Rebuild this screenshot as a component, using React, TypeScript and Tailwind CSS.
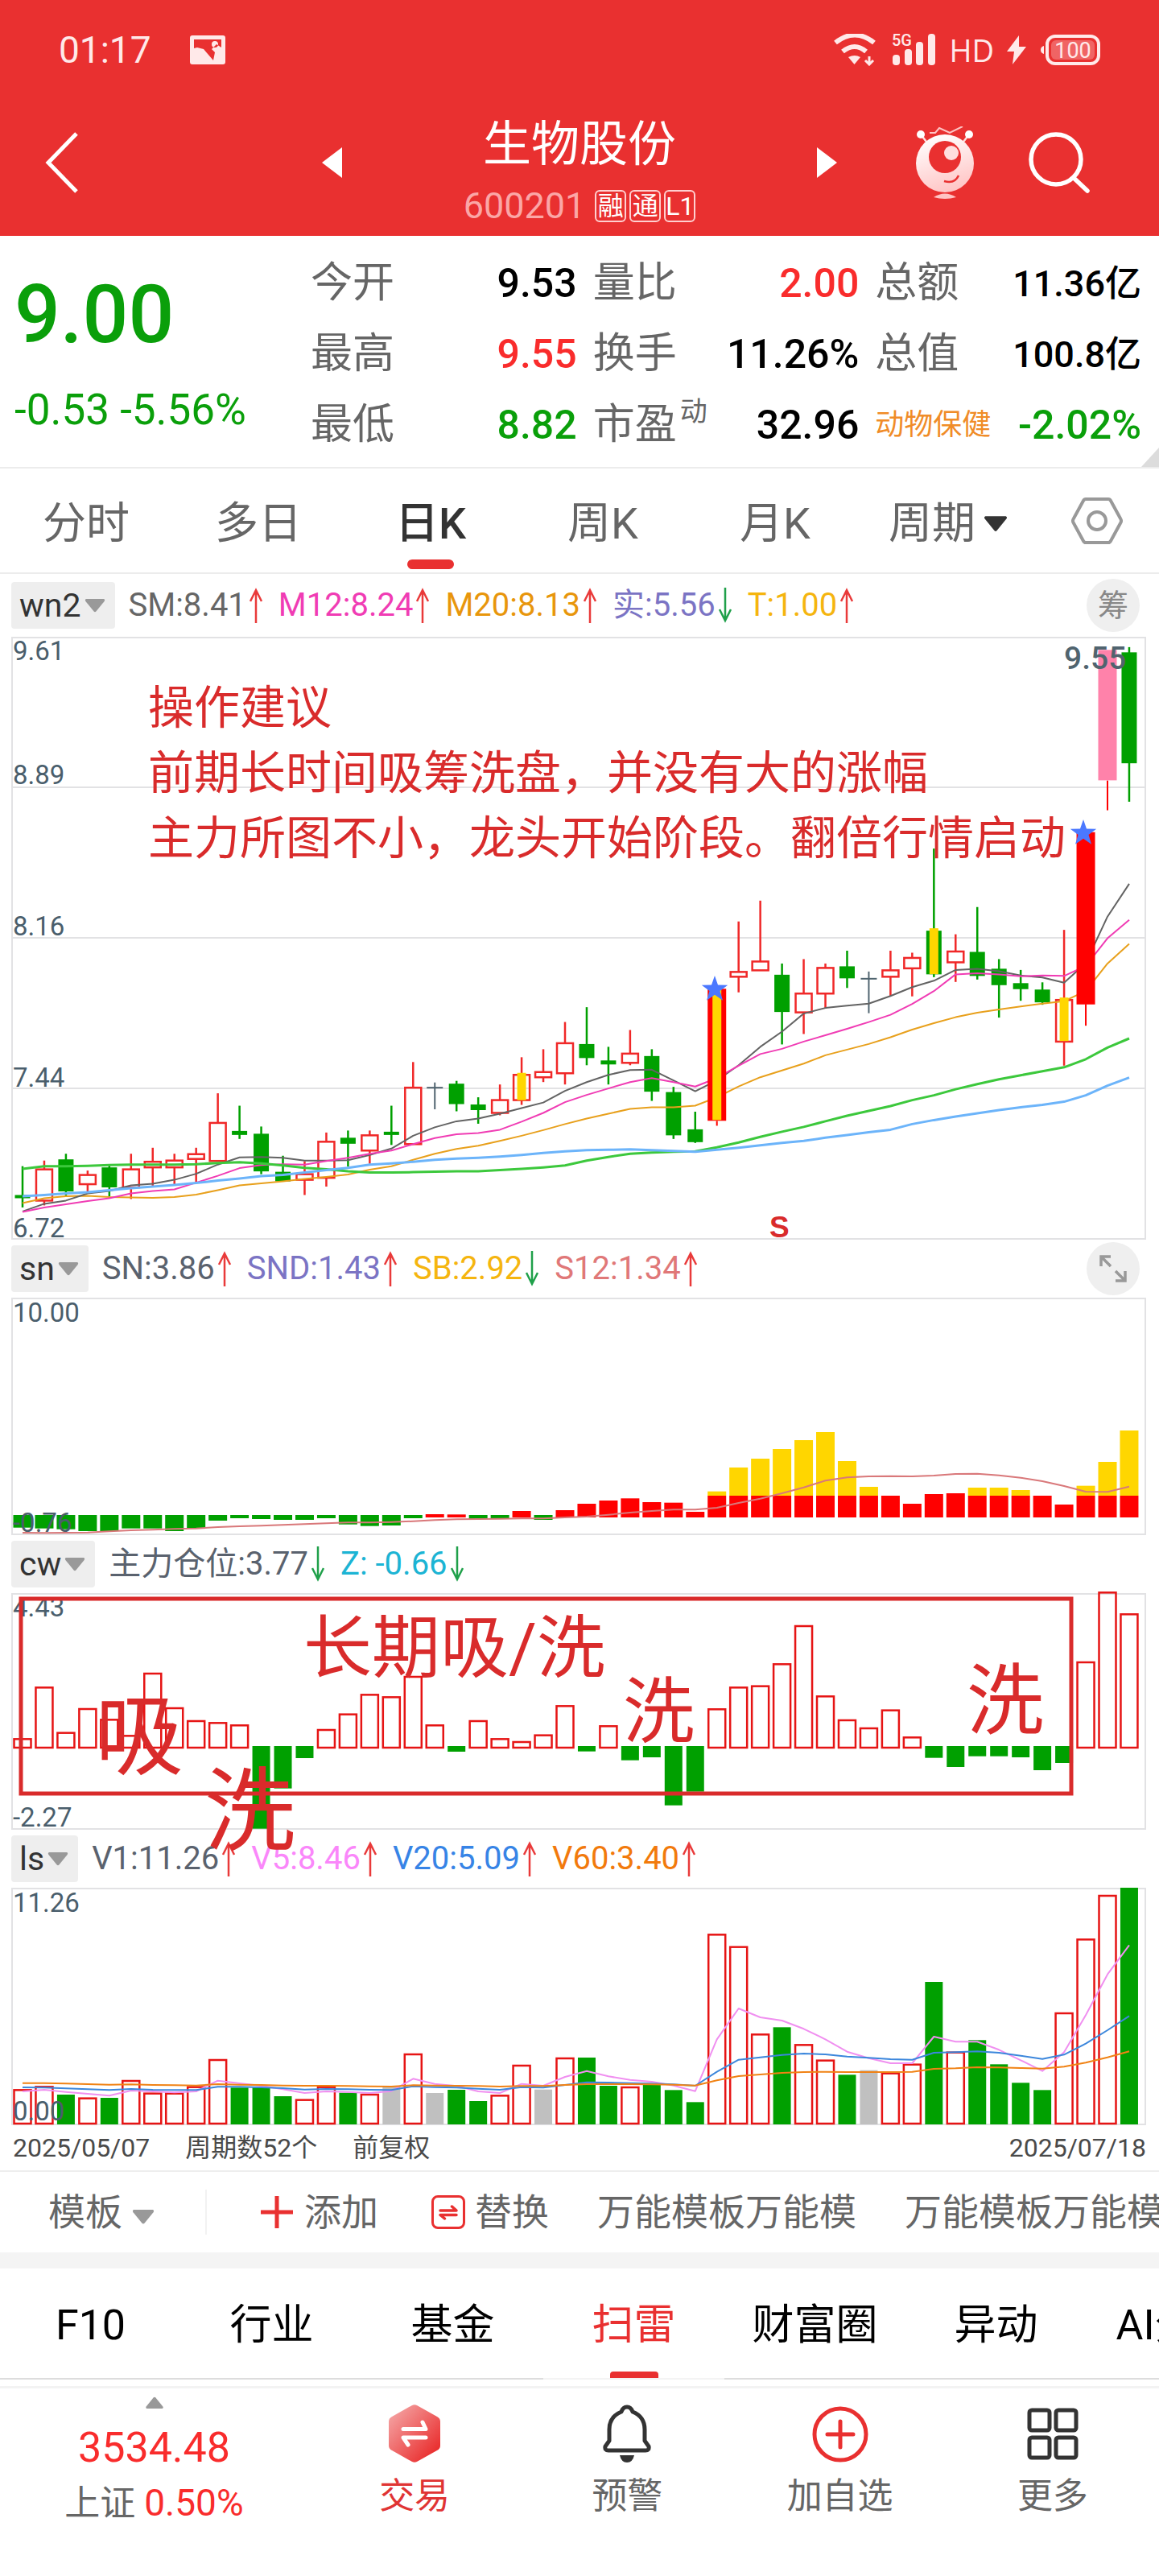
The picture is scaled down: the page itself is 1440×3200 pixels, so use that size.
import React from "react";

type Kind = "up" | "down" | "flat";

const STEP = 26.96;
const cx = (i: number) => 28 + STEP * i;

const line = (ys: number[], map: (v: number) => number) =>
  ys.map((v, i) => `${cx(i).toFixed(1)},${map(v).toFixed(1)}`).join(" ");

/* ---------- K-line data: kind, high, body top, body bottom, low ---------- */
const CANDLES: [Kind, number, number, number, number][] = [
  ["down", 1342, 1414, 1420, 1445],
  ["up", 1328, 1350, 1428, 1440],
  ["down", 1311, 1325, 1405, 1415],
  ["up", 1353, 1364, 1387, 1405],
  ["down", 1340, 1345, 1395, 1418],
  ["up", 1311, 1350, 1395, 1424],
  ["up", 1296, 1331, 1345, 1392],
  ["up", 1311, 1328, 1345, 1388],
  ["up", 1296, 1312, 1324, 1382],
  ["up", 1160, 1234, 1329, 1329],
  ["down", 1191, 1254, 1264, 1274],
  ["down", 1243, 1261, 1355, 1362],
  ["down", 1316, 1356, 1380, 1380],
  ["up", 1330, 1362, 1376, 1414],
  ["up", 1258, 1281, 1371, 1393],
  ["down", 1253, 1271, 1286, 1343],
  ["up", 1253, 1265, 1303, 1336],
  ["down", 1191, 1256, 1264, 1289],
  ["up", 1082, 1146, 1287, 1287],
  ["flat", 1133, 1146, 1146, 1200],
  ["down", 1129, 1136, 1187, 1205],
  ["down", 1170, 1188, 1202, 1236],
  ["up", 1138, 1177, 1209, 1215],
  ["up", 1070, 1114, 1177, 1189],
  ["up", 1050, 1107, 1120, 1132],
  ["up", 982, 1035, 1110, 1138],
  ["down", 945, 1037, 1072, 1090],
  ["down", 1044, 1078, 1088, 1138],
  ["up", 1002, 1061, 1084, 1090],
  ["down", 1050, 1067, 1156, 1179],
  ["down", 1144, 1157, 1265, 1274],
  ["down", 1206, 1250, 1282, 1284],
  ["up", 899, 899, 1229, 1242],
  ["up", 731, 857, 869, 908],
  ["up", 679, 831, 853, 853],
  ["down", 836, 864, 957, 1038],
  ["up", 825, 911, 958, 1012],
  ["up", 836, 847, 911, 948],
  ["down", 804, 843, 873, 897],
  ["flat", 856, 874, 874, 960],
  ["up", 804, 853, 869, 917],
  ["up", 809, 822, 848, 918],
  ["down", 549, 754, 863, 870],
  ["up", 763, 806, 833, 882],
  ["down", 695, 807, 867, 876],
  ["down", 825, 849, 890, 971],
  ["down", 852, 885, 900, 929],
  ["down", 883, 901, 933, 939],
  ["up", 752, 927, 1031, 1091],
  ["up", 508, 508, 937, 991],
  ["up", 53, 53, 379, 453],
  ["down", 46, 59, 336, 432],
];

const MA: { color: string; w: number; ys: number[] }[] = [
  { color: "#e8a01c", w: 2, ys: [1434, 1422, 1417, 1416, 1419, 1420, 1421, 1419, 1413, 1402, 1390, 1385, 1380, 1374, 1369, 1363, 1351, 1342, 1326, 1311, 1299, 1291, 1279, 1266, 1252, 1237, 1223, 1211, 1199, 1195, 1195, 1191, 1170, 1143, 1120, 1103, 1086, 1065, 1051, 1037, 1020, 1001, 985, 970, 959, 951, 943, 936, 930, 905, 836, 787] },
  { color: "#636363", w: 2, ys: [1455, 1436, 1428, 1410, 1404, 1390, 1386, 1376, 1361, 1338, 1320, 1319, 1321, 1328, 1328, 1327, 1314, 1298, 1266, 1245, 1230, 1223, 1211, 1197, 1183, 1154, 1132, 1114, 1102, 1101, 1128, 1155, 1128, 1090, 1044, 1006, 961, 947, 941, 936, 917, 895, 879, 852, 849, 855, 866, 871, 884, 835, 719, 637] },
  { color: "#f03cb4", w: 2, ys: [1456, 1445, 1437, 1429, 1422, 1410, 1404, 1400, 1383, 1366, 1347, 1339, 1337, 1338, 1329, 1321, 1311, 1303, 1287, 1272, 1262, 1259, 1251, 1231, 1209, 1182, 1164, 1148, 1132, 1122, 1132, 1143, 1122, 1091, 1062, 1049, 1031, 1015, 999, 982, 964, 937, 905, 863, 860, 863, 868, 866, 867, 842, 773, 727] },
  { color: "#3cc83c", w: 3, ys: [1349, 1342, 1342, 1341, 1339, 1338, 1338, 1338, 1337, 1334, 1332, 1335, 1340, 1346, 1350, 1355, 1358, 1358, 1357, 1356, 1355, 1355, 1352, 1349, 1345, 1340, 1328, 1319, 1311, 1308, 1306, 1305, 1295, 1283, 1269, 1256, 1244, 1230, 1216, 1204, 1192, 1177, 1165, 1150, 1137, 1125, 1115, 1105, 1095, 1075, 1046, 1023] },
  { color: "#6cb4fa", w: 3, ys: [1417, 1414, 1410, 1407, 1402, 1397, 1393, 1389, 1384, 1378, 1373, 1367, 1364, 1358, 1352, 1346, 1338, 1335, 1331, 1326, 1323, 1321, 1318, 1314, 1309, 1305, 1302, 1301, 1300, 1302, 1304, 1306, 1301, 1296, 1290, 1284, 1279, 1271, 1264, 1257, 1251, 1237, 1227, 1218, 1210, 1202, 1195, 1189, 1181, 1165, 1141, 1121] },
];

const ky = (v: number) => v / 2.01 - 10;

const Frame = ({ h, grid = [] }: { h: number; grid?: number[] }) => (
  <g stroke="#e2e2e4" strokeWidth="2" fill="none">
    <rect x="15" y="1" width="1408" height={h - 2} />
    {grid.map((y) => (
      <line key={y} x1="15" x2="1423" y1={y} y2={y} />
    ))}
  </g>
);

const AxisText = ({ y, children }: { y: number; children: string }) => (
  <text x="16" y={y} fontSize="33" fill="#4a5e6c">
    {children}
  </text>
);

const star = (x: number, y: number, r: number) =>
  Array.from({ length: 10 }, (_, i) => {
    const a = -Math.PI / 2 + (i * Math.PI) / 5;
    const q = i % 2 ? r * 0.4 : r;
    return `${(x + q * Math.cos(a)).toFixed(1)},${(y + q * Math.sin(a)).toFixed(1)}`;
  }).join(" ");

function KLineChart() {
  return (
    <svg viewBox="0 0 1440 749" className="block h-auto w-full" role="img" aria-label="日K线">
      <Frame h={749} grid={[187, 374, 561]} />
      <AxisText y={29}>9.61</AxisText>
      <AxisText y={183}>8.89</AxisText>
      <AxisText y={371}>8.16</AxisText>
      <AxisText y={559}>7.44</AxisText>
      <AxisText y={746}>6.72</AxisText>
      {CANDLES.map(([kind, hi, top, bot, lo], i) => {
        const x = cx(i);
        if (i === 32 || i === 49 || i === 50) return null;
        if (kind === "flat")
          return (
            <g key={i} stroke="#50646f" strokeWidth="2">
              <line x1={x} x2={x} y1={ky(hi)} y2={ky(lo)} />
              <line x1={x - 10} x2={x + 10} y1={ky(top)} y2={ky(top)} />
            </g>
          );
        if (kind === "down")
          return (
            <g key={i} fill="#00a000">
              <rect x={x - 1.25} width="2.5" y={ky(hi)} height={ky(lo) - ky(hi)} />
              <rect x={x - 9.5} width="19" y={ky(top)} height={Math.max(4, ky(bot) - ky(top))} />
            </g>
          );
        return (
          <g key={i} fill="none" stroke="#f02828" strokeWidth="2.500">
            <line x1={x} x2={x} y1={ky(hi)} y2={ky(top)} />
            <line x1={x} x2={x} y1={ky(bot)} y2={ky(lo)} />
            <rect x={x - 10} width="20" y={ky(top)} height={ky(bot) - ky(top)} />
          </g>
        );
      })}
      {MA.map((m) => (
        <polyline key={m.color} points={line(m.ys, ky)} fill="none" stroke={m.color} strokeWidth={m.w} strokeLinejoin="round" />
      ))}
      <g fill="#ffd600">
        <rect x={cx(23) - 5.5} width="11" y={ky(1109)} height={34} />
        <rect x={cx(42) - 5.5} width="11" y={ky(748)} height={57} />
        <rect x={cx(48) - 5.5} width="11" y={ky(921)} height={54} />
      </g>
      <g fill="#ff0000">
        <rect x={cx(32) - 11.5} width="23" y={ky(899)} height={164} />
        <rect x={cx(32) - 1} width="2" y={ky(1229)} height={6} />
        <rect x={cx(49) - 11.5} width="23" y={ky(508)} height={214} />
        <rect x={cx(49) - 1} width="2" y={ky(937)} height={27} />
        <rect x={cx(50) - 1} width="2" y={ky(379)} height={37} />
      </g>
      <rect x={cx(32) - 5.5} width="11" y={ky(899)} height={163} fill="#ffd600" />
      <rect x={cx(50) - 11.5} width="23" y={ky(53)} height={162} fill="#ff82aa" />
      <polygon points={star(888, 438, 17)} fill="#4b78ff" />
      <polygon points={star(1346, 244, 17)} fill="#4b78ff" />
      <text x="1322" y="40" fontSize="39" fontWeight="500" fill="#50646f">9.55</text>
      <text x="956" y="746" fontSize="37" fontWeight="700" fill="#d92b2b" fontFamily="Liberation Sans">S</text>
      <g fontSize="57" fill="#d92b2b">
        <text x="184" y="108">操作建议</text>
        <text x="184" y="189">前期长时间吸筹洗盘，并没有大的涨幅</text>
        <text x="184" y="270">主力所图不小，龙头开始阶段。翻倍行情启动</text>
      </g>
    </svg>
  );
}

/* g = below zero, r = above zero, y = above the strong threshold */
const SN: [string, number][] = [
  ["g", 1070], ["g", 1073], ["g", 1076], ["g", 1083], ["g", 1083], ["g", 1073], ["g", 1073], ["g", 1083], ["g", 1073], ["g", 1044],
  ["g", 1035], ["g", 1038], ["g", 1041], ["g", 1041], ["g", 1035], ["g", 1058], ["g", 1064], ["g", 1062], ["g", 1035], ["r", 1020],
  ["r", 1021], ["g", 1038], ["g", 1035], ["r", 1008], ["g", 1041], ["r", 1005], ["r", 981], ["r", 969], ["r", 961], ["r", 975],
  ["r", 977], ["r", 1011], ["y", 935], ["y", 846], ["y", 813], ["y", 777], ["y", 744], ["y", 714], ["y", 822], ["y", 918],
  ["r", 951], ["r", 981], ["r", 945], ["r", 942], ["y", 921], ["y", 921], ["y", 930], ["r", 951], ["r", 984], ["y", 914],
  ["y", 825], ["y", 708],
];
const SN_LINE = [1089, 1090, 1089, 1088, 1084, 1080, 1078, 1075, 1073, 1068, 1065, 1063, 1060, 1057, 1054, 1051, 1051, 1049, 1046, 1042, 1039, 1038, 1037, 1036, 1036, 1032, 1029, 1022, 1014, 1008, 1003, 1003, 996, 978, 962, 942, 920, 895, 883, 879, 878, 879, 876, 870, 869, 875, 884, 897, 915, 936, 937, 917];
const sy = (v: number) => v / 3 - 71;

function SnChart() {
  return (
    <svg viewBox="0 0 1440 295" className="block h-auto w-full" role="img" aria-label="sn 指标">
      <Frame h={295} />
      {SN.map(([k, v], i) => {
        const x = cx(i) - 11.5;
        if (k === "g") return <rect key={i} x={x} width="23" y="270" height={sy(v) - 270} fill="#00a000" />;
        return (
          <g key={i}>
            {k === "y" && <rect x={x} width="23" y={sy(v)} height={246 - sy(v)} fill="#ffd600" />}
            <rect x={x} width="23" y={k === "y" ? 246 : sy(v)} height={k === "y" ? 27 : 273 - sy(v)} fill="#ff0000" />
          </g>
        );
      })}
      <polyline points={line(SN_LINE, sy)} fill="none" stroke="#d9787a" strokeWidth="2" strokeLinejoin="round" />
      <AxisText y={30}>10.00</AxisText>
      <AxisText y={291}>-0.76</AxisText>
    </svg>
  );
}

const CW = [778, 586, 755, 666, 706, 766, 534, 663, 711, 718, 727, 1115, 965, 852, 744, 686, 613, 622, 546, 727, 828, 711, 778, 789, 764, 655, 827, 730, 860, 849, 1028, 977, 667, 586, 581, 499, 357, 619, 708, 738, 671, 772, 851, 885, 845, 845, 849, 897, 870, 492, 232, 313];
const cy = (v: number) => v / 3 - 79;

function CwChart() {
  return (
    <svg viewBox="0 0 1440 294" className="pointer-events-none relative z-10 block h-auto w-full overflow-visible" role="img" aria-label="主力仓位">
      <Frame h={294} />
      <AxisText y={29}>4.43</AxisText>
      <AxisText y={290}>-2.27</AxisText>
      {CW.map((v, i) =>
        v > 810 ? (
          <rect key={i} x={cx(i) - 11} width="22" y="190" height={cy(v) - 190} fill="#00a000" />
        ) : (
          <rect key={i} x={cx(i) - 10.5} width="21" y={cy(v) + 1} height={191 - cy(v)} fill="none" stroke="#e61414" strokeWidth="2.500" />
        ),
      )}
      <rect x="26" y="7" width="1305" height="242" fill="none" stroke="#d92b2b" strokeWidth="5" />
      <g fill="#d92b2b">
        <text x="377" y="98" fontSize="85">长期吸/洗</text>
        <text x="118" y="217" fontSize="110">吸</text>
        <text x="254" y="310" fontSize="113">洗</text>
        <text x="774" y="178" fontSize="89">洗</text>
        <text x="1201" y="167" fontSize="96">洗</text>
      </g>
    </svg>
  );
}

const VOL: [Kind, number][] = [
  ["up", 976], ["up", 964], ["down", 996], ["up", 1007], ["down", 1008], ["up", 942], ["up", 989], ["up", 989], ["up", 965], ["up", 864],
  ["down", 970], ["down", 970], ["down", 1002], ["up", 1013], ["up", 965], ["down", 989], ["up", 993], ["flat", 965], ["up", 843], ["flat", 990],
  ["down", 978], ["down", 1020], ["up", 997], ["up", 885], ["flat", 977], ["up", 858], ["down", 858], ["down", 963], ["up", 966], ["down", 960],
  ["down", 979], ["down", 1024], ["up", 397], ["up", 443], ["up", 769], ["down", 745], ["up", 808], ["up", 866], ["down", 922], ["flat", 905],
  ["up", 914], ["up", 881], ["down", 576], ["up", 836], ["down", 793], ["down", 883], ["down", 952], ["down", 979], ["up", 690], ["up", 415],
  ["up", 252], ["down", 223],
];
const VOL_LINES = [
  { color: "#f090f0", ys: [984, 978, 986, 993, 1000, 981, 984, 988, 984, 944, 954, 963, 976, 990, 984, 986, 990, 983, 937, 956, 964, 984, 990, 956, 963, 930, 908, 928, 941, 948, 962, 983, 790, 675, 708, 720, 751, 790, 836, 860, 879, 879, 780, 799, 799, 829, 868, 908, 838, 700, 548, 439] },
  { color: "#3c87dc", ys: [969, 970, 973, 976, 979, 975, 978, 979, 979, 967, 967, 969, 972, 977, 975, 976, 978, 979, 965, 968, 970, 974, 978, 968, 970, 960, 950, 951, 953, 955, 958, 963, 911, 866, 857, 848, 843, 846, 854, 859, 864, 866, 840, 838, 835, 840, 851, 863, 847, 806, 756, 703] },
  { color: "#f08214", ys: [953, 953, 955, 957, 959, 958, 960, 961, 962, 957, 959, 960, 962, 963, 963, 964, 965, 966, 961, 962, 963, 964, 966, 964, 964, 960, 957, 957, 957, 958, 959, 962, 943, 927, 921, 915, 912, 911, 912, 912, 912, 911, 900, 898, 894, 895, 897, 899, 892, 877, 857, 835] },
];
const vy = (v: number) => v / 3 - 75;

function VolumeChart() {
  return (
    <svg viewBox="0 0 1440 295" className="block h-auto w-full" role="img" aria-label="成交量">
      <Frame h={295} />
      {VOL.map(([k, v], i) =>
        k === "up" ? (
          <rect key={i} x={cx(i) - 10.5} width="21" y={vy(v) + 1} height={292 - vy(v)} fill="none" stroke="#e61414" strokeWidth="2.500" />
        ) : (
          <rect key={i} x={cx(i) - 11} width="22" y={vy(v)} height={294 - vy(v)} fill={k === "down" ? "#00a000" : "#c0c0c0"} />
        ),
      )}
      {VOL_LINES.map((l) => (
        <polyline key={l.color} points={line(l.ys, vy)} fill="none" stroke={l.color} strokeWidth="2" strokeLinejoin="round" />
      ))}
      <AxisText y={30}>11.26</AxisText>
      <AxisText y={289}>0.00</AxisText>
    </svg>
  );
}

/* ------------------------------ indicator rows ------------------------------ */
const Caret = ({ className }: { className: string }) => (
  <svg viewBox="0 0 26 18" className={className} aria-hidden="true">
    <path d="M2 1h22q2 1 .6 3L14.4 16.500q-1.400 1.500-2.800 0L1.400 4Q0 2 2 1z" fill="currentColor" />
  </svg>
);

const Arrow = ({ up }: { up: boolean }) => (
  <svg viewBox="0 0 16 44" className="h-11 w-4 shrink-0" fill="none" stroke={up ? "#e93a3a" : "#1fa04a"} strokeWidth="2.500" aria-hidden="true">
    <path d={up ? "M8 44V3M1 17L8 3l7 14" : "M8 0v41M1 27l7 14 7-14"} />
  </svg>
);

type Item = { text: string; color: string; up: boolean };

function IndicatorRow({ name, items, height, children }: { name: string; items: Item[]; height: string; children?: React.ReactNode }) {
  return (
    <div className={`flex items-center pr-6 pl-[14px] ${height}`}>
      <button className="flex h-[58px] items-center gap-1 rounded bg-[#eeeeee] pr-3 pl-[10px] text-[41px] leading-none text-[#333]">
        {name}
        <Caret className="w-[26px] text-[#999]" />
      </button>
      <div className="flex flex-1 items-center gap-5 pl-[17px]">
        {items.map((it) => (
          <span key={it.text} className={`flex items-center gap-1 text-[40px] leading-none whitespace-nowrap ${it.color}`}>
            {it.text}
            <Arrow up={it.up} />
          </span>
        ))}
      </div>
      {children}
    </div>
  );
}

/* --------------------------------- quote --------------------------------- */
const QUOTE: { label: string; sup?: string; value: string; color: string; small?: boolean }[] = [
  { label: "今开", value: "9.53", color: "text-black" },
  { label: "量比", value: "2.00", color: "text-[#f92c2c]" },
  { label: "总额", value: "11.36亿", color: "text-black", small: true },
  { label: "最高", value: "9.55", color: "text-[#f92c2c]" },
  { label: "换手", value: "11.26%", color: "text-black" },
  { label: "总值", value: "100.8亿", color: "text-black", small: true },
  { label: "最低", value: "8.82", color: "text-[#0a9f0a]" },
  { label: "市盈", sup: "动", value: "32.96", color: "text-black" },
  { label: "动物保健", value: "-2.02%", color: "text-[#0a9f0a]" },
];

function StatusBar() {
  return (
    <div className="flex h-[120px] items-center px-[73px] pt-1 text-[#ffe9e9]">
      <span className="text-[46px] leading-none">01:17</span>
      <svg viewBox="0 0 44 36" className="ml-[48px] h-9 w-11" aria-hidden="true">
        <path fillRule="evenodd" fill="currentColor" d="M3 0h38q3 0 3 3v30q0 3-3 3H3q-3 0-3-3V3q0-3 3-3zM5 5v11l4-1 8 2 12 14 2-10-4-4 6-6 6 4V5zM31 7a4 4 0 1 1 0 8 4 4 0 0 1 0-8z" />
      </svg>
      <div className="flex flex-1 items-center justify-end">
        <svg viewBox="0 0 52 40" className="h-10 w-[52px]" fill="none" stroke="currentColor" aria-hidden="true">
          <path d="M2 11q24-19 48 0" strokeWidth="6" />
          <path d="M11 22q15-12 29 0" strokeWidth="6" />
          <path d="M18 29q8-4 15 0l-7.500 9z" fill="currentColor" stroke="none" />
          <path d="M44 28v9M39 33l5 5 5-5" strokeWidth="3" />
        </svg>
        <svg viewBox="0 0 54 40" className="ml-[21px] h-10 w-[54px] overflow-visible" fill="currentColor" aria-hidden="true">
          <text x="-1" y="15" fontSize="20" fontWeight="500">5G</text>
          <rect x="0" y="26" width="9" height="13" rx="4" />
          <rect x="15" y="19" width="9" height="20" rx="4" />
          <rect x="29" y="10" width="9" height="29" rx="4" />
          <rect x="44" y="0" width="9" height="39" rx="4" />
        </svg>
        <span className="ml-4 font-['Open_Sans'] text-[38px] leading-none">HD</span>
        <svg viewBox="0 0 24 36" className="ml-4 h-9 w-6" fill="currentColor" aria-hidden="true">
          <path d="M15 0L0 20h9L7 36l17-22h-9z" />
        </svg>
        <svg viewBox="0 0 74 38" className="ml-[18px] h-[38px] w-[74px]" aria-hidden="true">
          <path d="M4 14v10q-4-1-4-5t4-5z" fill="currentColor" />
          <rect x="8" y="2" width="64" height="34" rx="10" fill="none" stroke="currentColor" strokeWidth="4" />
          <rect x="13" y="7" width="54" height="24" rx="6" fill="#f06464" />
          <text x="40" y="29" textAnchor="middle" fontSize="27" fill="currentColor">100</text>
        </svg>
      </div>
    </div>
  );
}

const Mascot = () => (
  <svg viewBox="0 0 72 90" className="h-[90px] w-[72px]" aria-hidden="true">
    <defs>
      <linearGradient id="m" x1="0.3" y1="0" x2="0.6" y2="1">
        <stop offset="0" stopColor="#fff" />
        <stop offset="1" stopColor="#ffc4c4" />
      </linearGradient>
    </defs>
    <path d="M17 8h7l5-6 13 6L58 0" fill="none" stroke="#ffc4c4" strokeWidth="2" />
    <path d="M6 10l10 13M66 10L56 23" stroke="#ffdede" strokeWidth="2.500" />
    <circle cx="6" cy="10" r="5" fill="#fff" />
    <circle cx="66" cy="10" r="5" fill="#fff" />
    <circle cx="36" cy="46" r="36" fill="url(#m)" />
    <circle cx="36" cy="38" r="20" fill="#e93030" />
    <circle cx="44" cy="33" r="9" fill="#ffdede" />
    <path d="M35 68q13 4 18-7" fill="none" stroke="#e93030" strokeWidth="2.500" />
    <path d="M22 88q14-9 28 0-14 4-28 0z" fill="#ffc4c4" />
  </svg>
);

function NavBar() {
  return (
    <div className="grid h-[164px] grid-cols-[1fr_640px_1fr] items-center">
      <button aria-label="返回" className="ml-14 justify-self-start">
        <svg viewBox="0 0 42 76" className="h-[76px] w-[42px]" fill="none" stroke="#fff" strokeWidth="5">
          <path d="M39 2L4 38l35 36" />
        </svg>
      </button>
      <div className="flex items-center justify-between">
        <button aria-label="上一只">
          <svg viewBox="0 0 26 38" className="h-[38px] w-[26px]" fill="#fff"><path d="M25 0v38L0 19z" /></svg>
        </button>
        <div className="flex h-[164px] flex-col items-center pt-[26px]">
          <h1 className="text-[60px] leading-[68px] text-white">生物股份</h1>
          <div className="mt-[22px] flex h-10 items-center gap-1">
            <span className="mr-2 text-[45px] leading-10 text-[#fba6a6]">600201</span>
            {["融", "通", "L1"].map((t) => (
              <span key={t} className="flex h-10 w-[39px] items-center justify-center rounded-md border-2 border-[#ffd0d0] text-[32px] leading-none text-white">
                {t}
              </span>
            ))}
          </div>
        </div>
        <button aria-label="下一只">
          <svg viewBox="0 0 26 38" className="h-[38px] w-[26px]" fill="#fff"><path d="M1 0v38l25-19z" /></svg>
        </button>
      </div>
      <div className="flex items-center justify-end gap-[68px] pr-[86px]">
        <button aria-label="助手"><Mascot /></button>
        <button aria-label="搜索">
          <svg viewBox="0 0 76 76" className="h-[76px] w-[76px]" fill="none" stroke="#fff" strokeWidth="5.500" strokeLinecap="round">
            <circle cx="34" cy="34" r="31" />
            <path d="M56 57l17 16" />
          </svg>
        </button>
      </div>
    </div>
  );
}

function QuotePanel() {
  return (
    <section className="relative flex border-b-2 border-[#ececec] pt-[15px] pb-2">
      <div className="w-[386px] shrink-0 pl-[18px] text-[#0a9f0a]">
        <div className="pt-[33px] text-[100px] leading-[100px] font-medium">9.00</div>
        <div className="mt-[38px] text-[53px] leading-[60px] whitespace-nowrap">-0.53 -5.56%</div>
      </div>
      <dl className="grid flex-1 grid-cols-3 gap-x-5 pr-[22px]">
        {QUOTE.map((q) => (
          <div key={q.label} className="flex h-[88px] items-center justify-between whitespace-nowrap">
            <dt className={q.label.length > 2 ? "text-[36px] text-[#f08c28]" : "flex text-[52px] leading-none text-[#666]"}>
              {q.label}
              {q.sup && <sup className="-top-2 ml-1 text-[34px] leading-none">{q.sup}</sup>}
            </dt>
            <dd className={`leading-none font-medium ${q.small ? "text-[45px]" : "text-[50px]"} ${q.color}`}>{q.value}</dd>
          </div>
        ))}
      </dl>
      <svg viewBox="0 0 22 24" className="absolute right-0 bottom-0 h-6 w-[22px]" aria-hidden="true">
        <path d="M22 0v24H0z" fill="#dcdcdc" />
      </svg>
    </section>
  );
}

function PeriodTabs() {
  return (
    <nav className="flex h-[131px] border-b-2 border-[#ececec] text-[54px] text-[#666]">
      {["分时", "多日", "日K", "周K", "月K"].map((t) => (
        <button key={t} className={`relative w-[214px] pt-2 ${t === "日K" ? "font-medium text-[#333]" : ""}`}>
          {t}
          {t === "日K" && <span className="absolute bottom-1 left-1/2 h-3 w-[58px] -translate-x-1/2 rounded-full bg-[#e93030]" />}
        </button>
      ))}
      <button className="ml-[34px] flex items-center gap-[10px] pt-2">
        周期
        <Caret className="w-[30px] text-[#333]" />
      </button>
      <div className="flex flex-1 items-center justify-end pr-[45px]">
        <button aria-label="设置">
          <svg viewBox="0 0 64 60" className="h-[60px] w-16" fill="none" stroke="#999" strokeWidth="4" strokeLinejoin="round">
            <path d="M18 3h28q2 0 3 2l12 22q2 3 0 6L49 55q-1 2-3 2H18q-2 0-3-2L3 33q-2-3 0-6L15 5q1-2 3-2z" />
            <circle cx="32" cy="30" r="11" />
          </svg>
        </button>
      </div>
    </nav>
  );
}

const Swap = ({ stroke, className }: { stroke: string; className: string }) => (
  <svg viewBox="0 0 48 38" className={className} fill="none" stroke={stroke} strokeWidth="7" strokeLinecap="round" strokeLinejoin="round" aria-hidden="true">
    <path d="M4 14h40L33 4M44 25H4l11 9" />
  </svg>
);

function TemplateBar() {
  return (
    <div className="flex h-[102px] items-center overflow-hidden border-t-2 border-[#eeeeee] pl-[60px] text-[46px] leading-[56px] whitespace-nowrap text-[#666]">
      <button className="flex w-[197px] shrink-0 items-center gap-3 border-r-2 border-[#f2f2f2]">
        模板
        <Caret className="mt-3 w-[28px] text-[#999]" />
      </button>
      <button className="ml-[67px] flex shrink-0 items-center gap-[14px]">
        <svg viewBox="0 0 40 40" className="size-10" stroke="#e93030" strokeWidth="5"><path d="M20 0v40M0 20h40" /></svg>
        添加
      </button>
      <button className="ml-[66px] flex shrink-0 items-center gap-[12px]">
        <span className="flex h-[42px] w-[42px] items-center justify-center rounded-lg border-[3px] border-[#e93030]">
          <Swap stroke="#e93030" className="w-6" />
        </span>
        替换
      </button>
      <button className="ml-[60px] shrink-0">万能模板万能模</button>
      <button className="ml-[60px] shrink-0">万能模板万能模</button>
    </div>
  );
}

function InfoTabs() {
  return (
    <nav className="flex h-[138px] overflow-hidden text-[52px] leading-none text-black">
      {["F10", "行业", "基金", "扫雷", "财富圈", "异动", "AI分析"].map((t) => {
        const on = t === "扫雷";
        return (
          <button
            key={t}
            className={`relative w-[225px] shrink-0 whitespace-nowrap border-b-2 pt-[6px] ${on ? "border-[#f4f4f4] text-[#e93030]" : "border-[#dddddd]"}`}
          >
            {t}
            {on && <span className="absolute bottom-0 left-1/2 h-2 w-[60px] -translate-x-1/2 rounded-t bg-[#e93030]" />}
          </button>
        );
      })}
    </nav>
  );
}

function BottomBar() {
  const cell = "flex flex-1 flex-col items-center gap-[16px] pt-[20px] text-[44px] leading-[52px] text-[#666]";
  return (
    <footer className="mt-2 flex border-t-[3px] border-[#f3f3f3] pb-[50px]">
      <button className="flex w-[383px] flex-col items-center pt-[10px]">
        <Caret className="h-4 w-6 rotate-180 text-[#999]" />
        <span className="mt-[18px] text-[52px] leading-[60px] text-[#f92c2c]">3534.48</span>
        <span className="mt-2 text-[44px] leading-[60px] text-[#666]">
          上证 <span className="text-[46px] text-[#f92c2c]">0.50%</span>
        </span>
      </button>
      <button className={cell}>
        <svg viewBox="0 0 72 72" className="size-[72px]" aria-hidden="true">
          <defs>
            <linearGradient id="t" x1="0.1" y1="0.1" x2="0.9" y2="0.9">
              <stop offset="0" stopColor="#f4a0a0" />
              <stop offset="1" stopColor="#e92a2a" />
            </linearGradient>
          </defs>
          <path d="M33 1q3-1.500 6 0l25 14q4 2 4 6v30q0 4-4 6L39 71q-3 1.500-6 0L8 57q-4-2-4-6V21q0-4 4-6z" fill="url(#t)" />
          <path d="M22 30.500h28L46 22M50 41H22l6 9" fill="none" stroke="#fff" strokeWidth="5" strokeLinecap="round" strokeLinejoin="round" />
        </svg>
        <span className="text-[#e03434]">交易</span>
      </button>
      <button className={cell}>
        <svg viewBox="0 0 72 72" className="size-[72px]" fill="none" stroke="#333" strokeWidth="5" strokeLinejoin="round" aria-hidden="true">
          <path d="M36 3q-5 0-7 6Q14 15 14 31v14l-5 7q-1 5 4 5h46q5 0 4-5l-5-7V31Q58 15 43 9q-2-6-7-6z" />
          <path d="M27 63h18q-2 9-9 9t-9-9z" fill="#333" stroke="none" />
        </svg>
        <span>预警</span>
      </button>
      <button className={cell}>
        <svg viewBox="0 0 72 72" className="size-[72px]" fill="none" stroke="#e93030" strokeWidth="5" strokeLinecap="round" aria-hidden="true">
          <circle cx="36" cy="37" r="32" />
          <path d="M36 21v32M20 37h32" />
        </svg>
        <span>加自选</span>
      </button>
      <button className={cell}>
        <svg viewBox="0 0 72 72" className="size-[72px]" fill="none" stroke="#333" strokeWidth="5" aria-hidden="true">
          <rect x="7" y="7" width="25" height="25" rx="3" />
          <rect x="40" y="7" width="25" height="25" rx="3" />
          <rect x="7" y="41" width="25" height="25" rx="3" />
          <rect x="40" y="41" width="25" height="25" rx="3" />
        </svg>
        <span>更多</span>
      </button>
    </footer>
  );
}

export default function App() {
  return (
    <main className="min-h-screen overflow-x-hidden bg-white font-['Roboto','Noto_Sans_CJK_SC',sans-serif]" lang="zh-CN">
      <header className="bg-[#e93030] pb-[9px]">
        <StatusBar />
        <NavBar />
      </header>
      <QuotePanel />
      <PeriodTabs />
      <IndicatorRow
        name="wn2"
        height="h-[78px]"
        items={[
          { text: "SM:8.41", color: "text-[#666]", up: true },
          { text: "M12:8.24", color: "text-[#f03cb4]", up: true },
          { text: "M20:8.13", color: "text-[#e8960c]", up: true },
          { text: "实:5.56", color: "text-[#7b74c4]", up: false },
          { text: "T:1.00", color: "text-[#f5b50f]", up: true },
        ]}
      >
        <button className="flex size-[66px] items-center justify-center rounded-full bg-[#efefef] text-[38px] leading-none text-[#888]">筹</button>
      </IndicatorRow>
      <KLineChart />
      <IndicatorRow
        name="sn"
        height="h-[72px]"
        items={[
          { text: "SN:3.86", color: "text-[#5a626e]", up: true },
          { text: "SND:1.43", color: "text-[#7b74c4]", up: true },
          { text: "SB:2.92", color: "text-[#f5b50f]", up: false },
          { text: "S12:1.34", color: "text-[#e07878]", up: true },
        ]}
      >
        <button aria-label="展开" className="flex size-[66px] items-center justify-center rounded-full bg-[#efefef]">
          <svg viewBox="0 0 34 34" className="size-[34px]" fill="none" stroke="#999" strokeWidth="3.500">
            <path d="M2 14V2h12M2 2l12 12M32 20v12H20M32 32L20 20" />
          </svg>
        </button>
      </IndicatorRow>
      <SnChart />
      <IndicatorRow
        name="cw"
        height="h-[72px]"
        items={[
          { text: "主力仓位:3.77", color: "text-[#5a626e]", up: false },
          { text: "Z: -0.66", color: "text-[#1cb4d4]", up: false },
        ]}
      />
      <CwChart />
      <IndicatorRow
        name="ls"
        height="h-[72px]"
        items={[
          { text: "V1:11.26", color: "text-[#5a626e]", up: true },
          { text: "V5:8.46", color: "text-[#fa87fa]", up: true },
          { text: "V20:5.09", color: "text-[#3784e6]", up: true },
          { text: "V60:3.40", color: "text-[#f27a0c]", up: true },
        ]}
      />
      <VolumeChart />
      <div className="flex h-[56px] items-center gap-[44px] px-[16px] text-[32px] leading-none text-[#4a4a4a]">
        <span>2025/05/07</span>
        <span>周期数52个</span>
        <span className="flex-1">前复权</span>
        <span>2025/07/18</span>
      </div>
      <TemplateBar />
      <div className="h-5 bg-[#f4f4f4]" />
      <InfoTabs />
      <BottomBar />
    </main>
  );
}
